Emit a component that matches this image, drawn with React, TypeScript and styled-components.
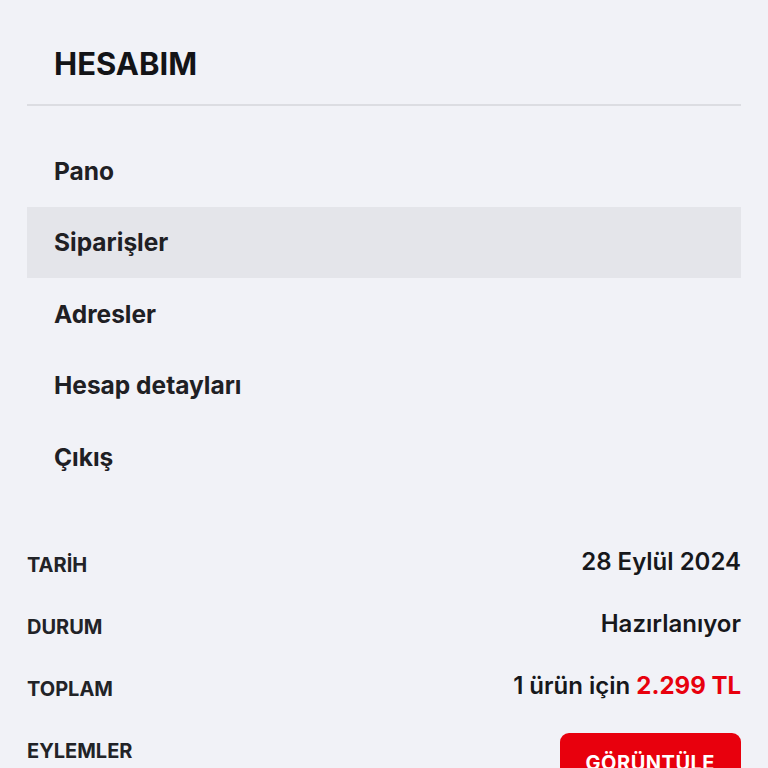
import React from "react";
import styled, { createGlobalStyle } from "styled-components";

const menu = ["Pano", "Siparişler", "Adresler", "Hesap detayları", "Çıkış"];

function App() {
  return (
    <>
      <GlobalStyle />
      <Page>
        <Header>
          <Title>HESABIM</Title>
        </Header>
        <Menu>
          {menu.map((item) => (
            <MenuItem key={item} $active={item === "Siparişler"}>
              {item}
            </MenuItem>
          ))}
        </Menu>
        <Details>
          <Row>
            <Label>TARİH</Label>
            <Value>28 Eylül 2024</Value>
          </Row>
          <Row>
            <Label>DURUM</Label>
            <Value>Hazırlanıyor</Value>
          </Row>
          <Row>
            <Label>TOPLAM</Label>
            <Value>
              1 ürün için <Price>2.299 TL</Price>
            </Value>
          </Row>
          <Row>
            <Label>EYLEMLER</Label>
            <ViewButton>GÖRÜNTÜLE</ViewButton>
          </Row>
        </Details>
      </Page>
    </>
  );
}

export default App;

const GlobalStyle = createGlobalStyle`
  html, body {
    margin: 0;
    padding: 0;
    background: #f1f2f7;
    font-family: Inter, "Noto Sans", sans-serif;
    color: #1d1e22;
    overflow: hidden;
  }
  * {
    box-sizing: border-box;
  }
`;

const Page = styled.div`
  display: flex;
  flex-direction: column;
  padding: 0 27px;
  min-height: 768px;
`;

const Header = styled.div`
  height: 106px;
  padding: 40px 27px 0;
  border-bottom: 2px solid #dcdde2;
`;

const Title = styled.h1`
  margin: 0;
  font-size: 31px;
  line-height: 48px;
  font-weight: 700;
  color: #131417;
`;

const Menu = styled.ul`
  list-style: none;
  margin: 0;
  padding: 29px 0 0;
`;

const MenuItem = styled.li<{ $active?: boolean }>`
  display: flex;
  align-items: center;
  height: 71.5px;
  padding: 0 27px;
  font-size: 24.5px;
  font-weight: 700;
  color: #1f2024;
  background: ${({ $active }) => ($active ? "#e4e5ea" : "transparent")};
`;

const Details = styled.div`
  display: flex;
  flex-direction: column;
  padding-top: 41px;
`;

const Row = styled.div`
  display: flex;
  justify-content: space-between;
  align-items: flex-start;
  padding: 17px 0;
`;

const Label = styled.span`
  font-size: 20px;
  line-height: 28px;
  font-weight: 700;
  color: #222327;
`;

const Value = styled.span`
  margin-top: -2px;
  font-size: 24px;
  line-height: 26px;
  font-weight: 600;
  color: #17181b;
`;

const Price = styled.span`
  color: #e8000d;
  font-weight: 700;
`;

const ViewButton = styled.button`
  margin-top: -4px;
  height: 60px;
  padding: 0 26px;
  border: none;
  border-radius: 9px;
  background: #e8000d;
  color: #fff;
  font-family: inherit;
  font-size: 20px;
  font-weight: 700;
  letter-spacing: 0.5px;
`;
